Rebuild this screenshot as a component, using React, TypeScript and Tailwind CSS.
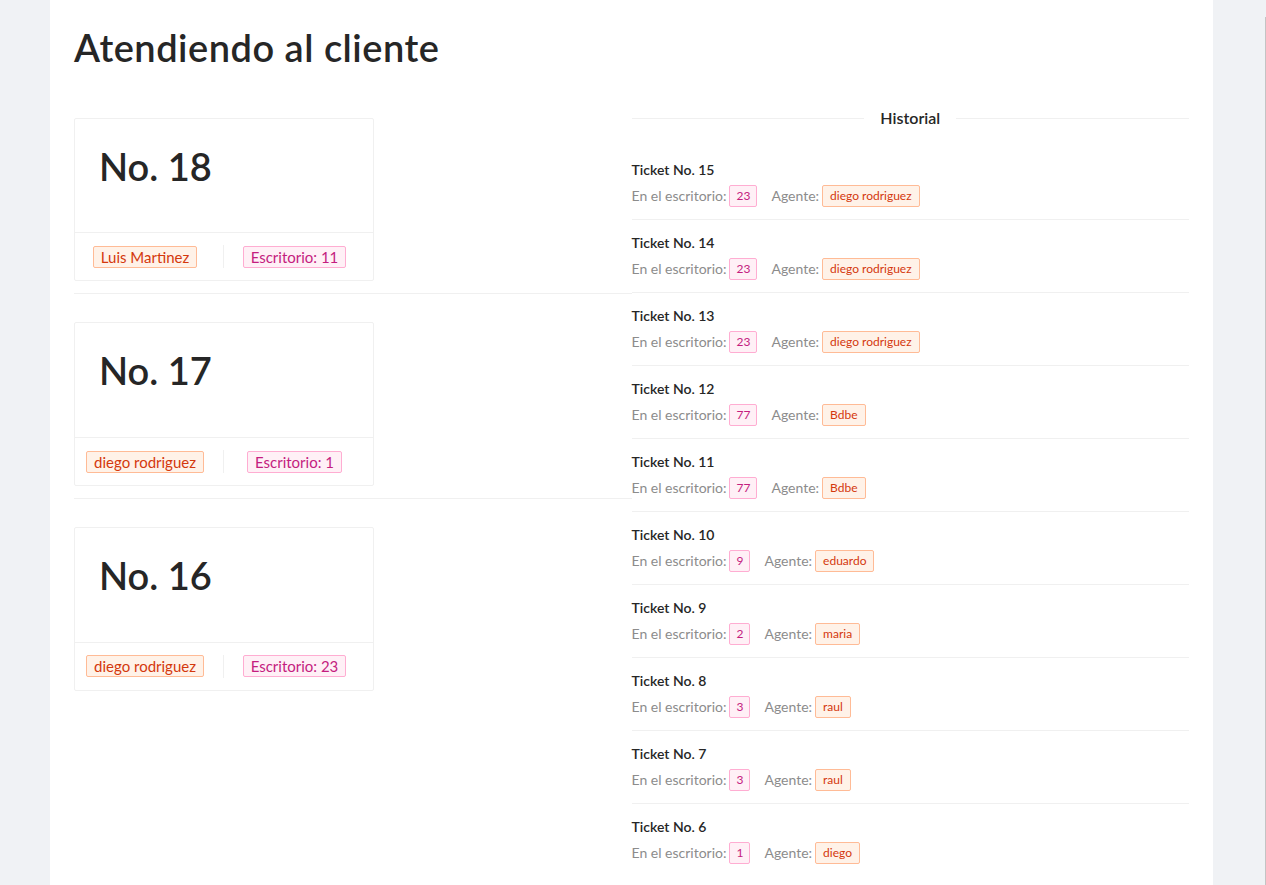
import React from "react"

type Ticket = { number: number; desk: number; agent: string }

const current: Ticket[] = [
	{ number: 18, desk: 11, agent: "Luis Martinez" },
	{ number: 17, desk: 1, agent: "diego rodriguez" },
	{ number: 16, desk: 23, agent: "diego rodriguez" },
]

const history: Ticket[] = [
	{ number: 15, desk: 23, agent: "diego rodriguez" },
	{ number: 14, desk: 23, agent: "diego rodriguez" },
	{ number: 13, desk: 23, agent: "diego rodriguez" },
	{ number: 12, desk: 77, agent: "Bdbe" },
	{ number: 11, desk: 77, agent: "Bdbe" },
	{ number: 10, desk: 9, agent: "eduardo" },
	{ number: 9, desk: 2, agent: "maria" },
	{ number: 8, desk: 3, agent: "raul" },
	{ number: 7, desk: 3, agent: "raul" },
	{ number: 6, desk: 1, agent: "diego" },
]

const tagBase = "inline-block mr-2 rounded-[2px] border whitespace-nowrap"
const volcano = "bg-[#fff2e8] text-[#d4380d] border-[#ffbb96]"
const magenta = "bg-[#fff0f6] text-[#c41d7f] border-[#ffadd2]"

function TicketCard({ ticket, last }: { ticket: Ticket; last: boolean }) {
	return (
		<div className={last ? "py-3" : "border-b border-[#f0f0f0] py-3"}>
			<div className="mt-4 w-[300px] rounded-[2px] border border-[#f0f0f0] bg-white">
				<div className="p-6">
					<h1 className="mb-[19px] text-[38px] font-semibold leading-[1.23] text-[#262626]">
						No. {ticket.number}
					</h1>
				</div>
				<ul className="flex border-t border-[#f0f0f0]">
					<li className="my-3 flex h-[23px] w-1/2 items-center justify-center border-r border-[#f0f0f0]">
						<span className={`${tagBase} ${volcano} px-[7px] text-[15px] leading-[20px]`}>{ticket.agent}</span>
					</li>
					<li className="my-3 flex h-[23px] w-1/2 items-center justify-center">
						<span className={`${tagBase} ${magenta} px-[7px] text-[15px] leading-[20px]`}>
							Escritorio: {ticket.desk}
						</span>
					</li>
				</ul>
			</div>
		</div>
	)
}

function HistoryItem({ ticket, last }: { ticket: Ticket; last: boolean }) {
	return (
		<li className={last ? "py-3" : "border-b border-[#f0f0f0] py-3"}>
			<div className="mb-1 h-[22px] text-sm font-semibold leading-[22px] text-[#262626]">
				Ticket No. {ticket.number}
			</div>
			<div className="flex h-[22px] items-center whitespace-nowrap text-sm text-[#8c8c8c]">
				<span className="mr-[3px]">En el escritorio:</span>
				<span className={`${tagBase} ${magenta} px-[6px] text-xs leading-[20px]`}>{ticket.desk}</span>
				<span className="ml-[6px] mr-[3px]">Agente:</span>
				<span className={`${tagBase} ${volcano} px-[7px] text-xs leading-[20px]`}>{ticket.agent}</span>
			</div>
		</li>
	)
}

export default function App() {
	return (
		<div
			className="flex h-[885px] w-full overflow-hidden bg-[#f0f2f5] text-[#262626]"
			style={{ fontFamily: 'Lato, "Open Sans", sans-serif' }}>
			<div className="w-[50px] shrink-0" />
			<main className="w-[1163px] shrink-0 bg-white p-6">
				<h1 className="mb-[19px] text-[38px] font-semibold leading-[1.23] tracking-[0.5px] text-[#262626]">
					Atendiendo al cliente
				</h1>
				<div className="grid grid-cols-2">
					<div>
						{current.map((t, i) => (
							<TicketCard key={t.number} ticket={t} last={i === current.length - 1} />
						))}
					</div>
					<div>
						{/* Divider with title */}
						<div className="my-4 flex h-[25px] items-center text-base font-semibold text-[#262626]">
							<span className="flex-1 border-t border-[#f0f0f0]" />
							<span className="px-4">Historial</span>
							<span className="flex-1 border-t border-[#f0f0f0]" />
						</div>
						<ul>
							{history.map((t, i) => (
								<HistoryItem key={t.number} ticket={t} last={i === history.length - 1} />
							))}
						</ul>
					</div>
				</div>
			</main>
			<div className="flex flex-1 justify-end">
				<div className="mt-[17px] w-px bg-[#c4c4c4]" />
			</div>
		</div>
	)
}
